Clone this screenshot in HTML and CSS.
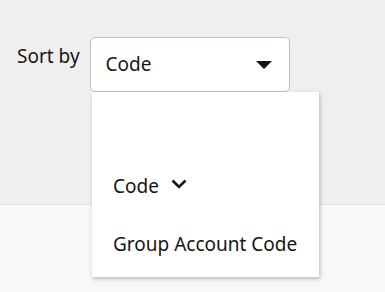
FILE: index.html
```html
<!DOCTYPE html>
<html lang="en">
<head>
  <meta charset="UTF-8" />
  <meta name="viewport" content="width=device-width, initial-scale=1.0" />
  <title>Sort by</title>
  <link rel="stylesheet" href="styles.css">
</head>
<body>
  <div class="page">
    <div class="toolbar">
      <div class="sort-row">
        <label class="sort-label">Sort by</label>
        <div class="select">
          <span class="select-value">Code</span>
          <svg class="caret" width="16" height="8" viewBox="0 0 16 8">
            <path d="M0 0 H16 L8 8 Z" fill="#161513" />
          </svg>
        </div>
      </div>
    </div>
    <div class="content"></div>

    <ul class="menu">
      <li class="menu-item empty"></li>
      <li class="menu-item">
        Code
        <svg class="chevron" width="16" height="10" viewBox="0 0 16 10">
          <path d="M1.5 1.5 L8 8 L14.5 1.5" fill="none" stroke="#161513" stroke-width="2.6" />
        </svg>
      </li>
      <li class="menu-item">Group Account Code</li>
    </ul>
  </div>
</body>
</html>
```

FILE: styles.css
```css
* {
  margin: 0;
  padding: 0;
  box-sizing: border-box;
}
body {
  font-family: 'Noto Sans', sans-serif;
  font-size: 19px;
  line-height: 24px;
  color: #161513;
  background: #f9f8f7;
}
.page {
  position: relative;
  height: 292px;
  overflow: hidden;
}
.toolbar {
  height: 205px;
  background: #f1efed;
  border-bottom: 1px solid #e2dfdc;
  padding: 37px 0 0 17px;
}
.sort-row {
  display: flex;
  align-items: flex-start;
  gap: 10px;
}
.sort-label {
  margin-top: 7px;
}
.select {
  width: 200px;
  height: 55px;
  background: #fff;
  border: 1px solid #c3c0bc;
  border-radius: 5px;
  padding: 14px 17px 0 15px;
  display: flex;
  justify-content: space-between;
}
.caret {
  margin-top: 9px;
}
.menu {
  list-style: none;
  position: absolute;
  left: 92px;
  top: 92px;
  width: 227px;
  height: 185px;
  background: #fff;
  padding-top: 7px;
  box-shadow: 1px 2px 4px rgba(0, 0, 0, 0.25);
}
.menu-item {
  padding: 17px 21px;
  height: 58px;
  display: flex;
  align-items: flex-start;
}
.chevron {
  margin: 5px 0 0 12px;
}
```
